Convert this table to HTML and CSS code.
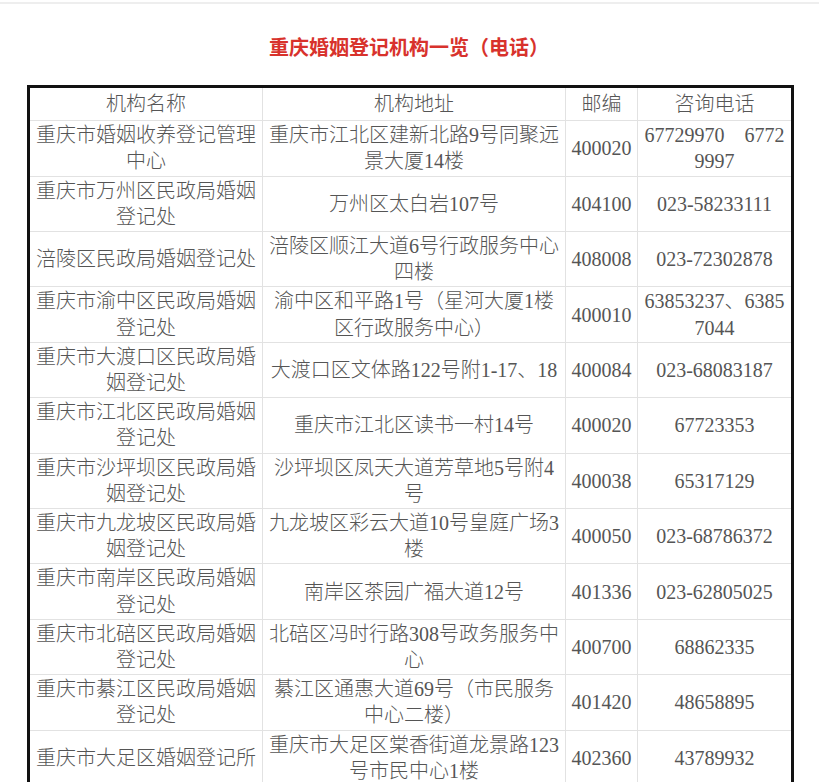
FILE: index.html
```html
<!DOCTYPE html>
<html lang="zh-CN">
<head>
<meta charset="utf-8">
<title>重庆婚姻登记机构一览（电话）</title>
<link rel="stylesheet" href="styles.css">
</head>
<body>
<div class="topline"></div>
<main class="page">
  <h1 class="title">重庆婚姻登记机构一览（电话）</h1>
  <table class="list">
    <colgroup>
      <col class="c-name"><col class="c-addr"><col class="c-zip"><col class="c-tel">
    </colgroup>
    <thead>
      <tr><th>机构名称</th><th>机构地址</th><th>邮编</th><th>咨询电话</th></tr>
    </thead>
    <tbody>
      <tr><td>重庆市婚姻收养登记管理<br>中心</td><td>重庆市江北区建新北路9号同聚远<br>景大厦14楼</td><td>400020</td><td>67729970　6772<br>9997</td></tr>
      <tr><td>重庆市万州区民政局婚姻<br>登记处</td><td>万州区太白岩107号</td><td>404100</td><td>023-58233111</td></tr>
      <tr><td>涪陵区民政局婚姻登记处</td><td>涪陵区顺江大道6号行政服务中心<br>四楼</td><td>408008</td><td>023-72302878</td></tr>
      <tr><td>重庆市渝中区民政局婚姻<br>登记处</td><td>渝中区和平路1号（星河大厦1楼<br>区行政服务中心）</td><td>400010</td><td>63853237、6385<br>7044</td></tr>
      <tr><td>重庆市大渡口区民政局婚<br>姻登记处</td><td>大渡口区文体路122号附1-17、18</td><td>400084</td><td>023-68083187</td></tr>
      <tr><td>重庆市江北区民政局婚姻<br>登记处</td><td>重庆市江北区读书一村14号</td><td>400020</td><td>67723353</td></tr>
      <tr><td>重庆市沙坪坝区民政局婚<br>姻登记处</td><td>沙坪坝区凤天大道芳草地5号附4<br>号</td><td>400038</td><td>65317129</td></tr>
      <tr><td>重庆市九龙坡区民政局婚<br>姻登记处</td><td>九龙坡区彩云大道10号皇庭广场3<br>楼</td><td>400050</td><td>023-68786372</td></tr>
      <tr><td>重庆市南岸区民政局婚姻<br>登记处</td><td>南岸区茶园广福大道12号</td><td>401336</td><td>023-62805025</td></tr>
      <tr><td>重庆市北碚区民政局婚姻<br>登记处</td><td>北碚区冯时行路308号政务服务中<br>心</td><td>400700</td><td>68862335</td></tr>
      <tr><td>重庆市綦江区民政局婚姻<br>登记处</td><td>綦江区通惠大道69号（市民服务<br>中心二楼）</td><td>401420</td><td>48658895</td></tr>
      <tr><td>重庆市大足区婚姻登记所</td><td>重庆市大足区棠香街道龙景路123<br>号市民中心1楼</td><td>402360</td><td>43789932</td></tr>
    </tbody>
  </table>
</main>
</body>
</html>
```

FILE: styles.css
```css
html, body {
  margin: 0;
  padding: 0;
  background: #ffffff;
}

.topline {
  height: 2px;
  margin-top: 2px;
  background: #eeeeee;
}

.page {
  padding: 0 0 0 27px;
}

.title {
  margin: 29px 0 0 0;
  width: 764px;
  text-align: center;
  font-family: "Noto Sans CJK SC", sans-serif;
  font-weight: 700;
  font-size: 20px;
  line-height: 28px;
  color: #d8322c;
  letter-spacing: 0;
}

.list {
  margin-top: 24px;
  width: 764px;
  border-collapse: collapse;
  border: 3px solid #111111;
  table-layout: fixed;
  font-family: "Liberation Serif", "Noto Sans CJK SC", serif;
  font-weight: 300;
  font-size: 20px;
  color: #555555;
}

.c-name { width: 234px; }
.c-addr { width: 303px; }
.c-zip { width: 72px; }
.c-tel { width: 155px; }

.list th,
.list td {
  border: 1px solid #e2e2e2;
  text-align: center;
  vertical-align: middle;
  padding: 1px 4px;
  line-height: 26.2px;
  white-space: nowrap;
  overflow: hidden;
}

.list th {
  font-weight: 300;
  padding: 3px 4px;
}
```
